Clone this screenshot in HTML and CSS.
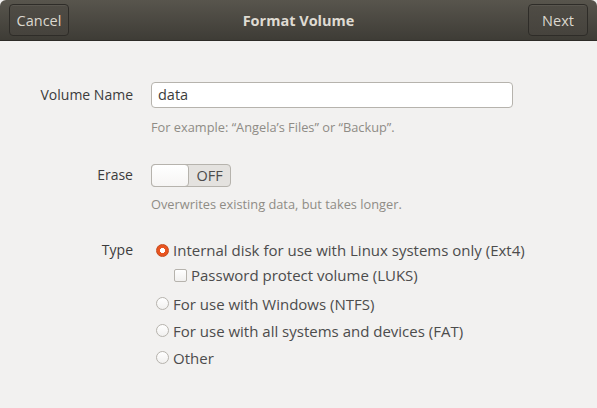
FILE: index.html
```html
<!DOCTYPE html>
<html>
<head>
<meta charset="utf-8">
<link rel="stylesheet" href="styles.css">
</head>
<body>
<div class="window">
  <header class="headerbar">
    <button class="hbtn">Cancel</button>
    <div class="title">Format Volume</div>
    <button class="hbtn">Next</button>
  </header>
  <main class="content">
    <div class="form">
      <div class="label row-name">Volume Name</div>
      <div class="field">
        <div class="entry">data</div>
        <div class="hint hint-name">For example: “Angela’s Files” or “Backup”.</div>
      </div>

      <div class="label row-erase">Erase</div>
      <div class="field field-erase">
        <div class="switch"><span class="knob"></span><span class="state">OFF</span></div>
        <div class="hint hint-erase">Overwrites existing data, but takes longer.</div>
      </div>

      <div class="label row-type">Type</div>
      <div class="field field-type">
        <div class="opt first"><span class="radio on"></span>Internal disk for use with Linux systems only (Ext4)</div>
        <div class="opt sub"><span class="check"></span>Password protect volume (LUKS)</div>
        <div class="opt"><span class="radio"></span>For use with Windows (NTFS)</div>
        <div class="opt"><span class="radio"></span>For use with all systems and devices (FAT)</div>
        <div class="opt"><span class="radio"></span>Other</div>
      </div>
    </div>
  </main>
</div>
</body>
</html>
```

FILE: styles.css
```css
* { box-sizing: border-box; }
html, body { margin: 0; padding: 0; }
body {
  width: 597px;
  height: 408px;
  overflow: hidden;
  background: #f2f1f0;
  font-family: "Open Sans", "DejaVu Sans", sans-serif;
  font-size: 14px;
  color: #4c4c4c;
}
.window { width: 597px; height: 408px; background: #f2f1f0; }
.headerbar {
  height: 41px;
  background: linear-gradient(#58554d, #3e3c36);
  border-bottom: 1px solid #2d2b27;
  border-radius: 6px 6px 0 0;
  display: flex;
  align-items: center;
  justify-content: space-between;
  padding: 0 9px;
}
.hbtn {
  width: 60px;
  height: 32px;
  border: 1px solid #2e2c28;
  border-radius: 4px;
  background: linear-gradient(#4f4c45, #46433d);
  box-shadow: inset 0 1px rgba(255,255,255,0.06);
  color: #dcd8cf;
  font-family: "Open Sans", "DejaVu Sans", sans-serif;
  font-size: 14.5px;
  padding: 0;
}
.title {
  color: #dfdbd2;
  font-weight: bold;
  font-size: 14.5px;
}
.content { padding-top: 41px; }
.form {
  display: grid;
  grid-template-columns: 133px 1fr;
  column-gap: 18px;
  align-items: start;
}
.label {
  text-align: right;
  color: #3c3c3c;
  line-height: 26px;
}
.row-erase { margin-top: 29px; line-height: 22px; }
.row-type { margin-top: 28px; line-height: 20px; }
.field { display: flex; flex-direction: column; align-items: flex-start; white-space: nowrap; }
.entry {
  width: 362px;
  height: 26px;
  border: 1px solid #b6b3ad;
  border-radius: 4px;
  background: #ffffff;
  padding: 0 6px;
  line-height: 24px;
  color: #3c3c3c;
  font-size: 14.5px;
}
.hint {
  font-size: 12.8px;
  color: #8f8c86;
  line-height: 16px;
}
.hint-name { margin-top: 11px; }
.field-erase { margin-top: 29px; }
.hint-erase { margin-top: 9px; }
.switch {
  width: 80px;
  height: 23px;
  border: 1px solid #b6b3ad;
  border-radius: 4px;
  background: #e4e2df;
  display: flex;
  align-items: center;
}
.knob {
  width: 38px;
  height: 23px;
  margin: -1px 0 0 -1px;
  border: 1px solid #b6b3ad;
  border-radius: 4px;
  background: linear-gradient(#ffffff, #f6f5f4);
  align-self: flex-start;
}
.state {
  flex: 1;
  text-align: center;
  color: #4c4c4c;
  font-size: 14.5px;
}
.field-type { margin-top: 28px; }
.opt {
  display: flex;
  align-items: center;
  height: 27px;
  color: #4c4c4c;
  font-size: 15px;
}
.opt.first { height: 20px; }
.opt.sub { padding-left: 18px; height: 30px; }
.radio {
  width: 13px;
  height: 13px;
  border-radius: 50%;
  border: 1px solid #b6b3ad;
  background: linear-gradient(#ffffff, #f1f0ef);
  margin: 0 4px 0 5px;
  flex: none;
}
.radio.on {
  border-color: #c44a1c;
  background: radial-gradient(circle, #ffffff 0 2.3px, #e95420 2.8px);
}
.check {
  width: 13px;
  height: 13px;
  border-radius: 2px;
  border: 1px solid #b6b3ad;
  background: linear-gradient(#ffffff, #f1f0ef);
  margin: 0 4px 0 5px;
  flex: none;
}
```
